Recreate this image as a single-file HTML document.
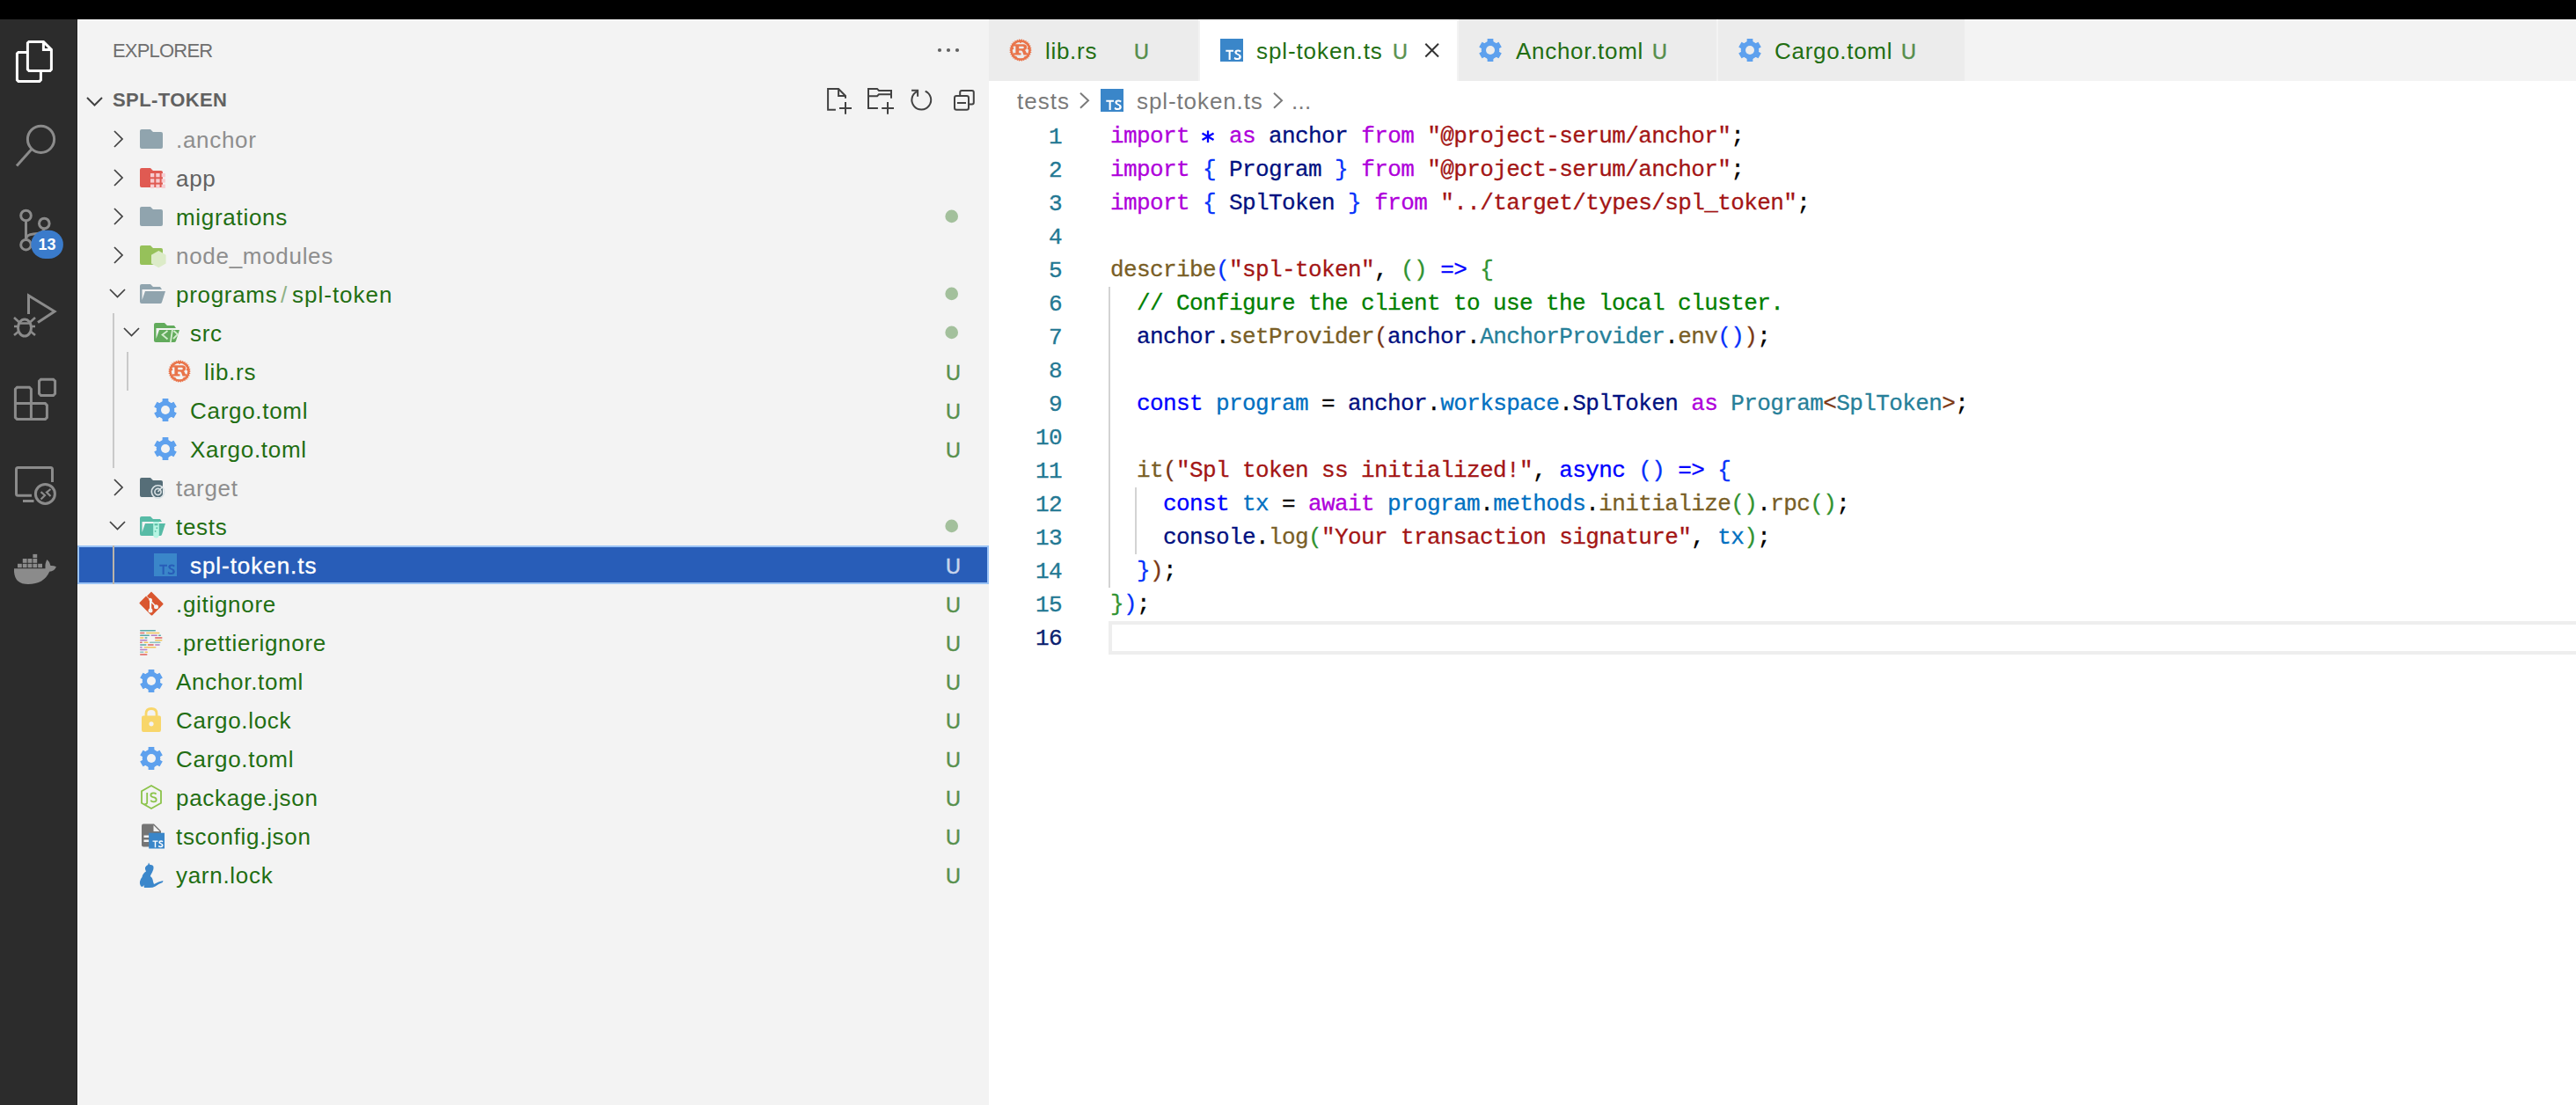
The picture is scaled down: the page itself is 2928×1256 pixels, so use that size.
<!DOCTYPE html><html><head><meta charset="utf-8"><style>
html,body{margin:0;padding:0;}
body{width:2928px;height:1256px;overflow:hidden;position:relative;background:#fff;font-family:'Liberation Sans', sans-serif;}
div{box-sizing:border-box;}
</style></head><body>
<div style="position:absolute;left:0;top:0;width:2928px;height:22px;background:#000"></div>
<div style="position:absolute;left:0;top:22px;width:88px;height:1234px;background:#2c2c2c"></div>
<div style="position:absolute;left:88px;top:22px;width:1036px;height:1234px;background:#f3f3f3"></div>
<div style="position:absolute;left:1124px;top:22px;width:1804px;height:70px;background:#f3f3f3"></div>
<div style="position:absolute;left:87px;top:22px;width:1px;height:1234px;background:#222"></div>
<div style="position:absolute;left:88px;top:22px;width:1px;height:1234px;background:#fff"></div>
<div style="position:absolute;left:88px;top:22px;width:2840px;height:1px;background:#fafafa"></div>
<svg style="position:absolute;left:0px;top:0px;overflow:visible" width="88" height="700" viewBox="0 0 88 700" ><path d="M32.9 47.4 H49.4 L58.4 56.4 V78.9 L56.9 80.4 H32.9 L31.4 78.9 V48.9 Z M49.4 47.4 V56.4 H58.4" fill="none" stroke="#fff" stroke-width="3" stroke-linejoin="miter"/><path d="M31.4 59.4 H20.9 L19.4 60.9 V90.9 L20.9 92.4 H44.9 L46.4 90.9 V80.4" fill="none" stroke="#fff" stroke-width="3"/><circle cx="46.5" cy="158.3" r="15.1" fill="none" stroke="#8b8b8b" stroke-width="3"/><path d="M36 169.5 L19 188.5" stroke="#8b8b8b" stroke-width="3"/><circle cx="29.5" cy="245" r="5.8" fill="none" stroke="#8b8b8b" stroke-width="3"/><circle cx="50.3" cy="254" r="5.8" fill="none" stroke="#8b8b8b" stroke-width="3"/><circle cx="29.5" cy="278.2" r="5.8" fill="none" stroke="#8b8b8b" stroke-width="3"/><path d="M29.5 250.8 V272.4 M29.5 272 Q30 266.5 38 266 Q50 265 50.3 259.8" fill="none" stroke="#8b8b8b" stroke-width="3"/><rect x="35.3" y="261.7" width="36.6" height="32.4" rx="16.2" fill="#3a7bcb"/><text x="53.5" y="284.4" text-anchor="middle" font-family="Liberation Sans" font-weight="bold" font-size="18" fill="#fff">13</text><path d="M32.5 357 V336 L62 354 L43 366.5" fill="none" stroke="#8b8b8b" stroke-width="3" stroke-linejoin="miter"/><ellipse cx="28" cy="372.5" rx="7.5" ry="9.5" fill="none" stroke="#8b8b8b" stroke-width="3"/><path d="M21 367.5 H35 M16 361 L21.5 366 M40 361 L34.5 366 M16 371 H20.5 M35.5 371 H40 M16 381 L21.5 376.5 M40 381 L34.5 376.5" fill="none" stroke="#8b8b8b" stroke-width="2.6"/><path d="M19.4 440.3 H33.4 L35.4 442.3 V458.6 H51.4 L53.4 460.6 V474.6 L51.4 476.6 H19.4 L17.4 474.6 V442.3 Z M17.4 458.6 H35.4 V476.6" fill="none" stroke="#8b8b8b" stroke-width="3"/><path d="M46.5 431.2 H60.6 L62.6 433.2 V447.5 L60.6 449.5 H46.5 L44.5 447.5 V433.2 Z" fill="none" stroke="#8b8b8b" stroke-width="3"/><path d="M36 563.2 H20.5 Q18.5 563.2 18.5 561.2 V533.5 Q18.5 531.5 20.5 531.5 H57.5 Q59.5 531.5 59.5 533.5 V548" fill="none" stroke="#8b8b8b" stroke-width="3"/><path d="M26 569.5 H38.5" stroke="#8b8b8b" stroke-width="3"/><circle cx="51.4" cy="561.4" r="11" fill="none" stroke="#8b8b8b" stroke-width="3"/><path d="M46.5 559.2 L51 563 L46.5 567.5 M57.5 556 L53 559.6 L57.5 564" fill="none" stroke="#8b8b8b" stroke-width="2.2"/><rect x="20.0" y="640.8" width="4.8" height="4.4" fill="#8b8b8b"/><rect x="25.8" y="640.8" width="4.8" height="4.4" fill="#8b8b8b"/><rect x="31.6" y="640.8" width="4.8" height="4.4" fill="#8b8b8b"/><rect x="37.4" y="640.8" width="4.8" height="4.4" fill="#8b8b8b"/><rect x="43.2" y="640.8" width="4.8" height="4.4" fill="#8b8b8b"/><rect x="25.8" y="635" width="4.8" height="4.8" fill="#8b8b8b"/><rect x="31.6" y="635" width="4.8" height="4.8" fill="#8b8b8b"/><rect x="37.4" y="635" width="4.8" height="4.8" fill="#8b8b8b"/><rect x="37.4" y="629.9" width="4.8" height="4.2" fill="#8b8b8b"/><path d="M16 646.2 H51.5 Q51 640 53.5 636 Q57 639 57.5 643 Q60.5 642.5 64 644.3 Q61.5 649.5 56.2 649.8 Q50 664 32 664 Q17 664 16 650 Z" fill="#8b8b8b"/></svg>
<div style="position:absolute;left:128px;top:36px;height:44px;line-height:44px;font-family:'Liberation Sans', sans-serif;font-size:22px;font-weight:normal;color:#6f6f6f;letter-spacing:-0.8px;white-space:pre;">EXPLORER</div>
<svg style="position:absolute;left:1060px;top:50px;overflow:visible" width="40" height="14" viewBox="0 0 40 14" ><circle cx="8" cy="7" r="2.1" fill="#616161"/><circle cx="18" cy="7" r="2.1" fill="#616161"/><circle cx="28" cy="7" r="2.1" fill="#616161"/></svg>
<svg style="position:absolute;left:98px;top:109.5px;overflow:visible" width="20" height="12" viewBox="0 0 20 12" ><path d="M1 1 L9.5 9.5 L18 1" fill="none" stroke="#424242" stroke-width="2"/></svg>
<div style="position:absolute;left:128px;top:92px;height:44px;line-height:44px;font-family:'Liberation Sans', sans-serif;font-size:22px;font-weight:bold;color:#616161;letter-spacing:0.4px;white-space:pre;">SPL-TOKEN</div>
<svg style="position:absolute;left:0px;top:0px;overflow:visible" width="1124" height="140" viewBox="0 0 1124 140" ><path d="M949.9 124.8 H941.1 V101.1 H953.1 L961 109 V111.7 M953.1 101.1 V109 H961" fill="none" stroke="#424242" stroke-width="2"/><path d="M961 116 V129.8 M954 122.9 H968" stroke="#424242" stroke-width="2"/><path d="M997.9 122.9 H987 V100.9 H997 L999 102.9 H1013 V111.7 M1013 107.2 H999 L997 109.2 H987" fill="none" stroke="#424242" stroke-width="2"/><path d="M1009 116 V129.8 M1002.2 122.9 H1016" stroke="#424242" stroke-width="2"/><path d="M1051.7 103.6 A10.9 10.9 0 1 1 1042.5 103.8" fill="none" stroke="#424242" stroke-width="2"/><path d="M1036.1 102.7 H1043.1 V109.7" fill="none" stroke="#424242" stroke-width="2"/><path d="M1091.2 108.5 V105 Q1091.2 103 1093.2 103 H1104.8 Q1106.8 103 1106.8 105 V116.6 Q1106.8 118.6 1104.8 118.6 H1101.5" fill="none" stroke="#424242" stroke-width="2"/><rect x="1085" y="109" width="16" height="15.8" rx="2.2" fill="none" stroke="#424242" stroke-width="2"/><path d="M1088 117 H1098" stroke="#424242" stroke-width="2"/></svg>
<div style="position:absolute;left:88px;top:620px;width:1036px;height:44px;background:#285db8;border:2px solid #9ac3f6"></div>
<div style="position:absolute;left:128px;top:356px;width:2px;height:176px;background:#c9c9c9"></div>
<div style="position:absolute;left:144px;top:400px;width:2px;height:44px;background:#c9c9c9"></div>
<div style="position:absolute;left:128px;top:620px;width:2px;height:44px;background:#b9b3a9"></div>
<svg style="position:absolute;left:128.5px;top:148px;overflow:visible" width="12" height="22" viewBox="0 0 12 22" ><path d="M1 1 L10 10 L1 19" fill="none" stroke="#424242" stroke-width="1.75"/></svg>
<svg style="position:absolute;left:159px;top:147px;overflow:visible" width="26" height="22" viewBox="0 0 26 22" ><path d="M2 0 H12 L15 3 H24 Q26 3 26 5 V20 Q26 22 24 22 H2 Q0 22 0 20 V2 Q0 0 2 0 Z" fill="#90a4ae"/></svg>
<div style="position:absolute;left:200px;top:137px;height:44px;line-height:44px;font-family:'Liberation Sans', sans-serif;font-size:26px;font-weight:normal;color:#8e8e8e;letter-spacing:0.7px;white-space:pre;">.anchor</div>
<svg style="position:absolute;left:128.5px;top:192px;overflow:visible" width="12" height="22" viewBox="0 0 12 22" ><path d="M1 1 L10 10 L1 19" fill="none" stroke="#424242" stroke-width="1.75"/></svg>
<svg style="position:absolute;left:159px;top:191px;overflow:visible" width="30" height="24" viewBox="0 0 30 24" ><path d="M2 0 H12 L15 3 H24 Q26 3 26 5 V20 Q26 22 24 22 H2 Q0 22 0 20 V2 Q0 0 2 0 Z" fill="#e05a52"/><rect x="12.0" y="6.0" width="4.3" height="4.3" fill="#f7cdd1"/><rect x="18.3" y="6.0" width="4.3" height="4.3" fill="#f7cdd1"/><rect x="24.6" y="6.0" width="4.3" height="4.3" fill="#f7cdd1"/><rect x="12.0" y="12.3" width="4.3" height="4.3" fill="#f7cdd1"/><rect x="18.3" y="12.3" width="4.3" height="4.3" fill="#f7cdd1"/><rect x="24.6" y="12.3" width="4.3" height="4.3" fill="#f7cdd1"/><rect x="12.0" y="18.6" width="4.3" height="4.3" fill="#f7cdd1"/><rect x="18.3" y="18.6" width="4.3" height="4.3" fill="#f7cdd1"/><rect x="24.6" y="18.6" width="4.3" height="4.3" fill="#f7cdd1"/></svg>
<div style="position:absolute;left:200px;top:181px;height:44px;line-height:44px;font-family:'Liberation Sans', sans-serif;font-size:26px;font-weight:normal;color:#616161;letter-spacing:0.7px;white-space:pre;">app</div>
<svg style="position:absolute;left:128.5px;top:236px;overflow:visible" width="12" height="22" viewBox="0 0 12 22" ><path d="M1 1 L10 10 L1 19" fill="none" stroke="#424242" stroke-width="1.75"/></svg>
<svg style="position:absolute;left:159px;top:235px;overflow:visible" width="26" height="22" viewBox="0 0 26 22" ><path d="M2 0 H12 L15 3 H24 Q26 3 26 5 V20 Q26 22 24 22 H2 Q0 22 0 20 V2 Q0 0 2 0 Z" fill="#90a4ae"/></svg>
<div style="position:absolute;left:200px;top:225px;height:44px;line-height:44px;font-family:'Liberation Sans', sans-serif;font-size:26px;font-weight:normal;color:#226e12;letter-spacing:0.7px;white-space:pre;">migrations</div>
<svg style="position:absolute;left:1074px;top:238px;overflow:visible" width="16" height="16" viewBox="0 0 16 16" ><circle cx="7.7" cy="7.9" r="7.3" fill="#a3c09c"/></svg>
<svg style="position:absolute;left:128.5px;top:280px;overflow:visible" width="12" height="22" viewBox="0 0 12 22" ><path d="M1 1 L10 10 L1 19" fill="none" stroke="#424242" stroke-width="1.75"/></svg>
<svg style="position:absolute;left:159px;top:279px;overflow:visible" width="30" height="26" viewBox="0 0 30 26" ><path d="M2 0 H12 L15 3 H24 Q26 3 26 5 V20 Q26 22 24 22 H2 Q0 22 0 20 V2 Q0 0 2 0 Z" fill="#96c15a"/><path d="M21.3 6 L29.6 10.8 V20.4 L21.3 25.2 L13 20.4 V10.8 Z" fill="#dcebc8"/></svg>
<div style="position:absolute;left:200px;top:269px;height:44px;line-height:44px;font-family:'Liberation Sans', sans-serif;font-size:26px;font-weight:normal;color:#8e8e8e;letter-spacing:0.7px;white-space:pre;">node_modules</div>
<svg style="position:absolute;left:124px;top:328px;overflow:visible" width="20" height="12" viewBox="0 0 20 12" ><path d="M1 1 L9.5 9.5 L18 1" fill="none" stroke="#424242" stroke-width="1.75"/></svg>
<svg style="position:absolute;left:159px;top:323px;overflow:visible" width="30" height="22" viewBox="0 0 30 22" ><path d="M2 0 H12 L15 3 H23 L25 6 H2.5 L2.5 18 L6 8 H29 L25 20.5 Q24.5 22 23 22 H2 Q0 22 0 20 V2 Q0 0 2 0 Z" fill="#90a4ae"/></svg>
<div style="position:absolute;left:200px;top:313px;height:44px;line-height:44px;font-family:'Liberation Sans', sans-serif;font-size:26px;font-weight:normal;color:#226e12;letter-spacing:0.7px;white-space:pre;">programs</div>
<div style="position:absolute;left:319px;top:313px;height:44px;line-height:44px;font-family:'Liberation Sans', sans-serif;font-size:26px;font-weight:normal;color:#8fb186;letter-spacing:0px;white-space:pre;">/</div>
<div style="position:absolute;left:332px;top:313px;height:44px;line-height:44px;font-family:'Liberation Sans', sans-serif;font-size:26px;font-weight:normal;color:#226e12;letter-spacing:1.0px;white-space:pre;">spl-token</div>
<svg style="position:absolute;left:1074px;top:326px;overflow:visible" width="16" height="16" viewBox="0 0 16 16" ><circle cx="7.7" cy="7.9" r="7.3" fill="#a3c09c"/></svg>
<svg style="position:absolute;left:140px;top:372px;overflow:visible" width="20" height="12" viewBox="0 0 20 12" ><path d="M1 1 L9.5 9.5 L18 1" fill="none" stroke="#424242" stroke-width="1.75"/></svg>
<svg style="position:absolute;left:175px;top:367px;overflow:visible" width="30" height="24" viewBox="0 0 30 24" ><path d="M2 0 H12 L15 3 H23 L25 6 H2.5 L2.5 18 L6 8 H29 L25 20.5 Q24.5 22 23 22 H2 Q0 22 0 20 V2 Q0 0 2 0 Z" fill="#62ab5c"/><path d="M15.5 9 L9.5 13.5 L15.5 18.5 M21 7.5 L18.8 22.5 M22.5 9 L27 13 L22 18" fill="none" stroke="#d4edd0" stroke-width="1.8"/></svg>
<div style="position:absolute;left:216px;top:357px;height:44px;line-height:44px;font-family:'Liberation Sans', sans-serif;font-size:26px;font-weight:normal;color:#226e12;letter-spacing:0.7px;white-space:pre;">src</div>
<svg style="position:absolute;left:1074px;top:370px;overflow:visible" width="16" height="16" viewBox="0 0 16 16" ><circle cx="7.7" cy="7.9" r="7.3" fill="#a3c09c"/></svg>
<svg style="position:absolute;left:191px;top:409px;overflow:visible" width="26" height="26" viewBox="0 0 26 26" ><path d="M23.60 14.30 L26.00 13.00 L23.60 11.70Z M23.10 16.48 L25.72 15.70 L23.64 13.93Z M22.15 18.50 L24.88 18.29 L23.21 16.12Z M20.81 20.28 L23.52 20.64 L22.34 18.18Z M19.13 21.75 L21.70 22.66 L21.06 20.01Z M17.17 22.83 L19.50 24.26 L19.43 21.53Z M15.04 23.48 L17.02 25.36 L17.51 22.68Z M12.82 23.68 L14.36 25.93 L15.40 23.41Z M10.60 23.41 L11.64 25.93 L13.18 23.68Z M8.49 22.68 L8.98 25.36 L10.96 23.48Z M6.57 21.53 L6.50 24.26 L8.83 22.83Z M4.94 20.01 L4.30 22.66 L6.87 21.75Z M3.66 18.18 L2.48 20.64 L5.19 20.28Z M2.79 16.12 L1.12 18.29 L3.85 18.50Z M2.36 13.93 L0.28 15.70 L2.90 16.48Z M2.40 11.70 L0.00 13.00 L2.40 14.30Z M2.90 9.52 L0.28 10.30 L2.36 12.07Z M3.85 7.50 L1.12 7.71 L2.79 9.88Z M5.19 5.72 L2.48 5.36 L3.66 7.82Z M6.87 4.25 L4.30 3.34 L4.94 5.99Z M8.83 3.17 L6.50 1.74 L6.57 4.47Z M10.96 2.52 L8.98 0.64 L8.49 3.32Z M13.18 2.32 L11.64 0.07 L10.60 2.59Z M15.40 2.59 L14.36 0.07 L12.82 2.32Z M17.51 3.32 L17.02 0.64 L15.04 2.52Z M19.43 4.47 L19.50 1.74 L17.17 3.17Z M21.06 5.99 L21.70 3.34 L19.13 4.25Z M22.34 7.82 L23.52 5.36 L20.81 5.72Z M23.21 9.88 L24.88 7.71 L22.15 7.50Z M23.64 12.07 L25.72 10.30 L23.10 9.52Z" fill="#e9744a"/><circle cx="13" cy="13" r="10.4" fill="none" stroke="#e9744a" stroke-width="2.4"/><circle cx="13" cy="3.9" r="1.1" fill="#e9744a"/><circle cx="4.2" cy="11.2" r="1.1" fill="#e9744a"/><circle cx="21.8" cy="11.2" r="1.1" fill="#e9744a"/><circle cx="7.6" cy="20.8" r="1.1" fill="#e9744a"/><circle cx="18.4" cy="20.8" r="1.1" fill="#e9744a"/><path d="M4.6 6.3 H16.3 Q20.2 6.3 20.2 9.8 Q20.2 12.3 17.8 13.1 Q18.8 13.6 19.3 15 L19.8 16.3 H21.5 V18.6 H16.5 L15.2 14.8 Q14.6 13.6 13.2 13.6 H11.2 V16.3 H13.5 V18.6 H4.6 V16.3 H7.4 V8.6 H4.6 Z M11.2 8.8 V11.2 H15.6 Q16.8 11.2 16.8 10 Q16.8 8.8 15.6 8.8 Z" fill="#e9744a" fill-rule="evenodd"/></svg>
<div style="position:absolute;left:232px;top:401px;height:44px;line-height:44px;font-family:'Liberation Sans', sans-serif;font-size:26px;font-weight:normal;color:#226e12;letter-spacing:0.7px;white-space:pre;">lib.rs</div>
<div style="position:absolute;left:1075px;top:401.5px;height:44px;line-height:44px;font-family:'Liberation Sans', sans-serif;font-size:23.4px;font-weight:normal;color:#226e12;letter-spacing:0px;white-space:pre;opacity:.75;-webkit-text-stroke:0.45px #226e12">U</div>
<svg style="position:absolute;left:175px;top:453px;overflow:visible" width="26" height="26" viewBox="0 0 26 26" ><path d="M9.58 3.60 L9.67 0.12 L16.33 0.12 L16.42 3.60 L19.43 5.34 L22.49 3.68 L25.82 9.45 L22.85 11.26 L22.85 14.74 L25.82 16.55 L22.49 22.32 L19.43 20.66 L16.42 22.40 L16.33 25.88 L9.67 25.88 L9.58 22.40 L6.57 20.66 L3.51 22.32 L0.18 16.55 L3.15 14.74 L3.15 11.26 L0.18 9.45 L3.51 3.68 L6.57 5.34 Z" fill="#5ea1ee"/><circle cx="13" cy="13" r="10.3" fill="#5ea1ee"/><circle cx="13" cy="13" r="5" fill="#f3f3f3"/></svg>
<div style="position:absolute;left:216px;top:445px;height:44px;line-height:44px;font-family:'Liberation Sans', sans-serif;font-size:26px;font-weight:normal;color:#226e12;letter-spacing:0.7px;white-space:pre;">Cargo.toml</div>
<div style="position:absolute;left:1075px;top:445.5px;height:44px;line-height:44px;font-family:'Liberation Sans', sans-serif;font-size:23.4px;font-weight:normal;color:#226e12;letter-spacing:0px;white-space:pre;opacity:.75;-webkit-text-stroke:0.45px #226e12">U</div>
<svg style="position:absolute;left:175px;top:497px;overflow:visible" width="26" height="26" viewBox="0 0 26 26" ><path d="M9.58 3.60 L9.67 0.12 L16.33 0.12 L16.42 3.60 L19.43 5.34 L22.49 3.68 L25.82 9.45 L22.85 11.26 L22.85 14.74 L25.82 16.55 L22.49 22.32 L19.43 20.66 L16.42 22.40 L16.33 25.88 L9.67 25.88 L9.58 22.40 L6.57 20.66 L3.51 22.32 L0.18 16.55 L3.15 14.74 L3.15 11.26 L0.18 9.45 L3.51 3.68 L6.57 5.34 Z" fill="#5ea1ee"/><circle cx="13" cy="13" r="10.3" fill="#5ea1ee"/><circle cx="13" cy="13" r="5" fill="#f3f3f3"/></svg>
<div style="position:absolute;left:216px;top:489px;height:44px;line-height:44px;font-family:'Liberation Sans', sans-serif;font-size:26px;font-weight:normal;color:#226e12;letter-spacing:0.7px;white-space:pre;">Xargo.toml</div>
<div style="position:absolute;left:1075px;top:489.5px;height:44px;line-height:44px;font-family:'Liberation Sans', sans-serif;font-size:23.4px;font-weight:normal;color:#226e12;letter-spacing:0px;white-space:pre;opacity:.75;-webkit-text-stroke:0.45px #226e12">U</div>
<svg style="position:absolute;left:128.5px;top:544px;overflow:visible" width="12" height="22" viewBox="0 0 12 22" ><path d="M1 1 L10 10 L1 19" fill="none" stroke="#424242" stroke-width="1.75"/></svg>
<svg style="position:absolute;left:159px;top:543px;overflow:visible" width="30" height="24" viewBox="0 0 30 24" ><path d="M2 0 H12 L15 3 H24 Q26 3 26 5 V20 Q26 22 24 22 H2 Q0 22 0 20 V2 Q0 0 2 0 Z" fill="#566e78"/><circle cx="20.5" cy="16" r="7.2" fill="none" stroke="#dbe3e6" stroke-width="1.6"/><circle cx="20.5" cy="16" r="3.6" fill="none" stroke="#dbe3e6" stroke-width="1.6"/><path d="M20.5 16 L26 10" stroke="#dbe3e6" stroke-width="1.6"/></svg>
<div style="position:absolute;left:200px;top:533px;height:44px;line-height:44px;font-family:'Liberation Sans', sans-serif;font-size:26px;font-weight:normal;color:#8e8e8e;letter-spacing:0.7px;white-space:pre;">target</div>
<svg style="position:absolute;left:124px;top:592px;overflow:visible" width="20" height="12" viewBox="0 0 20 12" ><path d="M1 1 L9.5 9.5 L18 1" fill="none" stroke="#424242" stroke-width="1.75"/></svg>
<svg style="position:absolute;left:159px;top:587px;overflow:visible" width="30" height="26" viewBox="0 0 30 26" ><path d="M2 0 H12 L15 3 H23 L25 6 H2.5 L2.5 18 L6 8 H29 L25 20.5 Q24.5 22 23 22 H2 Q0 22 0 20 V2 Q0 0 2 0 Z" fill="#57bba6"/><path d="M15.2 6 H21.8 V20.5 Q21.8 24.6 18.5 24.6 Q15.2 24.6 15.2 20.5 Z" fill="#b6f5e3"/><rect x="16.6" y="8.3" width="3.8" height="2" fill="#55bca2"/><circle cx="19.3" cy="13.2" r="0.9" fill="#55bca2"/><circle cx="17.6" cy="16.8" r="0.9" fill="#55bca2"/></svg>
<div style="position:absolute;left:200px;top:577px;height:44px;line-height:44px;font-family:'Liberation Sans', sans-serif;font-size:26px;font-weight:normal;color:#226e12;letter-spacing:0.7px;white-space:pre;">tests</div>
<svg style="position:absolute;left:1074px;top:590px;overflow:visible" width="16" height="16" viewBox="0 0 16 16" ><circle cx="7.7" cy="7.9" r="7.3" fill="#a3c09c"/></svg>
<svg style="position:absolute;left:175px;top:629px;overflow:visible" width="26" height="26" viewBox="0 0 26 26" ><g transform="scale(1.0)"><rect x="0" y="0" width="26" height="26" fill="#3a86c9"/><path d="M6.3 12.7 H15 V14.8 H11.7 V24 H9.6 V14.8 H6.3 Z" fill="#285db8"/><path d="M23.6 13.4 Q22 12.6 20.2 12.6 Q16.3 12.6 16.3 15.6 Q16.3 17.6 19.5 18.6 Q21.4 19.2 21.4 20.4 Q21.4 21.9 19.6 21.9 Q17.7 21.9 16.2 20.7 L15.6 22.9 Q17.4 24.1 19.7 24.1 Q23.8 24.1 23.8 20.5 Q23.8 18.2 20.8 17.2 Q18.7 16.5 18.7 15.5 Q18.7 14.6 20.2 14.6 Q21.7 14.6 23 15.4 Z" fill="#285db8"/></g></svg>
<div style="position:absolute;left:216px;top:621px;height:44px;line-height:44px;font-family:'Liberation Sans', sans-serif;font-size:26px;font-weight:normal;color:#ffffff;letter-spacing:0.95px;white-space:pre;-webkit-text-stroke:0.35px #fff">spl-token.ts</div>
<div style="position:absolute;left:1075px;top:621.5px;height:44px;line-height:44px;font-family:'Liberation Sans', sans-serif;font-size:23.4px;font-weight:normal;color:#ffffff;letter-spacing:0px;white-space:pre;opacity:.75;-webkit-text-stroke:0.45px #ffffff">U</div>
<svg style="position:absolute;left:158px;top:671.5px;overflow:visible" width="28" height="28" viewBox="0 0 28 28" ><path d="M14 0.5 L27.2 13.7 Q28 14.5 27.2 15.3 L15.3 27.2 Q14.5 28 13.7 27.2 L0.8 14.3 Q0 13.5 0.8 12.7 L8 5.5 L11.2 8.7 Q11 10 12 11 V19.5 Q10.5 20.4 10.5 22 Q10.5 24.5 13 24.5 Q15.5 24.5 15.5 22 Q15.5 20.4 14.2 19.5 V13.3 L17.3 16.4 Q17 17 17 17.7 Q17 20.2 19.5 20.2 Q22 20.2 22 17.7 Q22 15.2 19.5 15.2 Q18.9 15.2 18.4 15.4 L14.6 11.6 Q15 11 15 10.2 Q15 7.7 12.5 7.7 Q11.9 7.7 11.4 7.9 L9 5.5 L11 3.5 Z" fill="#d9562f"/></svg>
<div style="position:absolute;left:200px;top:665px;height:44px;line-height:44px;font-family:'Liberation Sans', sans-serif;font-size:26px;font-weight:normal;color:#226e12;letter-spacing:0.7px;white-space:pre;">.gitignore</div>
<div style="position:absolute;left:1075px;top:665.5px;height:44px;line-height:44px;font-family:'Liberation Sans', sans-serif;font-size:23.4px;font-weight:normal;color:#226e12;letter-spacing:0px;white-space:pre;opacity:.75;-webkit-text-stroke:0.45px #226e12">U</div>
<svg style="position:absolute;left:159px;top:714.5px;overflow:visible" width="28" height="32" viewBox="0 0 28 32" ><rect x="0" y="1.00" width="18" height="1.5" rx="0.7" fill="#5aa9a7"/><rect x="0" y="3.72" width="5.5" height="1.5" rx="0.7" fill="#e0706a"/><rect x="7" y="3.72" width="15.5" height="1.5" rx="0.7" fill="#f0c45c"/><rect x="0" y="6.44" width="11" height="1.5" rx="0.7" fill="#5aa9a7"/><rect x="12.5" y="6.44" width="7.5" height="1.5" rx="0.7" fill="#b57fc4"/><rect x="21" y="6.44" width="3" height="1.5" rx="0.7" fill="#5aa9a7"/><rect x="0" y="9.16" width="4.5" height="1.5" rx="0.7" fill="#f0c45c"/><rect x="5.5" y="9.16" width="3" height="1.5" rx="0.7" fill="#5aa9a7"/><rect x="17" y="9.16" width="8.5" height="1.5" rx="0.7" fill="#e0605a"/><rect x="0" y="11.88" width="8.5" height="1.5" rx="0.7" fill="#b57fc4"/><rect x="17" y="11.88" width="8.5" height="1.5" rx="0.7" fill="#f0c45c"/><rect x="0" y="14.60" width="2.8" height="1.5" rx="0.7" fill="#e0706a"/><rect x="4.5" y="14.60" width="5" height="1.5" rx="0.7" fill="#f0c45c"/><rect x="11" y="14.60" width="12.5" height="1.5" rx="0.7" fill="#8cc4c0"/><rect x="0" y="17.32" width="7.5" height="1.5" rx="0.7" fill="#5aa9a7"/><rect x="8.8" y="17.32" width="7" height="1.5" rx="0.7" fill="#e0605a"/><rect x="17" y="17.32" width="5.8" height="1.5" rx="0.7" fill="#b57fc4"/><rect x="0" y="20.04" width="2.8" height="1.5" rx="0.7" fill="#b57fc4"/><rect x="4.5" y="20.04" width="14" height="1.5" rx="0.7" fill="#f0c45c"/><rect x="0" y="22.76" width="8.5" height="1.5" rx="0.7" fill="#b57fc4"/><rect x="0" y="25.48" width="4.5" height="1.5" rx="0.7" fill="#8cc4c0"/><rect x="5.5" y="25.48" width="3.5" height="1.5" rx="0.7" fill="#f0c45c"/><rect x="0" y="28.20" width="8.5" height="1.5" rx="0.7" fill="#e0605a"/></svg>
<div style="position:absolute;left:200px;top:709px;height:44px;line-height:44px;font-family:'Liberation Sans', sans-serif;font-size:26px;font-weight:normal;color:#226e12;letter-spacing:0.7px;white-space:pre;">.prettierignore</div>
<div style="position:absolute;left:1075px;top:709.5px;height:44px;line-height:44px;font-family:'Liberation Sans', sans-serif;font-size:23.4px;font-weight:normal;color:#226e12;letter-spacing:0px;white-space:pre;opacity:.75;-webkit-text-stroke:0.45px #226e12">U</div>
<svg style="position:absolute;left:159px;top:761px;overflow:visible" width="26" height="26" viewBox="0 0 26 26" ><path d="M9.58 3.60 L9.67 0.12 L16.33 0.12 L16.42 3.60 L19.43 5.34 L22.49 3.68 L25.82 9.45 L22.85 11.26 L22.85 14.74 L25.82 16.55 L22.49 22.32 L19.43 20.66 L16.42 22.40 L16.33 25.88 L9.67 25.88 L9.58 22.40 L6.57 20.66 L3.51 22.32 L0.18 16.55 L3.15 14.74 L3.15 11.26 L0.18 9.45 L3.51 3.68 L6.57 5.34 Z" fill="#5ea1ee"/><circle cx="13" cy="13" r="10.3" fill="#5ea1ee"/><circle cx="13" cy="13" r="5" fill="#f3f3f3"/></svg>
<div style="position:absolute;left:200px;top:753px;height:44px;line-height:44px;font-family:'Liberation Sans', sans-serif;font-size:26px;font-weight:normal;color:#226e12;letter-spacing:0.7px;white-space:pre;">Anchor.toml</div>
<div style="position:absolute;left:1075px;top:753.5px;height:44px;line-height:44px;font-family:'Liberation Sans', sans-serif;font-size:23.4px;font-weight:normal;color:#226e12;letter-spacing:0px;white-space:pre;opacity:.75;-webkit-text-stroke:0.45px #226e12">U</div>
<svg style="position:absolute;left:159px;top:804px;overflow:visible" width="26" height="30" viewBox="0 0 26 30" ><path d="M7 10 V7 Q7 1.5 13 1.5 Q19 1.5 19 7 V10" fill="none" stroke="#f8d66a" stroke-width="2.8"/><path d="M4 9.5 H22 Q24 9.5 24 11.5 V25.5 Q24 28 22 28 H4 Q2 28 2 25.5 V11.5 Q2 9.5 4 9.5 Z" fill="#f8d66a"/><circle cx="13" cy="18.8" r="2.6" fill="#f3f3f3"/></svg>
<div style="position:absolute;left:200px;top:797px;height:44px;line-height:44px;font-family:'Liberation Sans', sans-serif;font-size:26px;font-weight:normal;color:#226e12;letter-spacing:0.7px;white-space:pre;">Cargo.lock</div>
<div style="position:absolute;left:1075px;top:797.5px;height:44px;line-height:44px;font-family:'Liberation Sans', sans-serif;font-size:23.4px;font-weight:normal;color:#226e12;letter-spacing:0px;white-space:pre;opacity:.75;-webkit-text-stroke:0.45px #226e12">U</div>
<svg style="position:absolute;left:159px;top:849px;overflow:visible" width="26" height="26" viewBox="0 0 26 26" ><path d="M9.58 3.60 L9.67 0.12 L16.33 0.12 L16.42 3.60 L19.43 5.34 L22.49 3.68 L25.82 9.45 L22.85 11.26 L22.85 14.74 L25.82 16.55 L22.49 22.32 L19.43 20.66 L16.42 22.40 L16.33 25.88 L9.67 25.88 L9.58 22.40 L6.57 20.66 L3.51 22.32 L0.18 16.55 L3.15 14.74 L3.15 11.26 L0.18 9.45 L3.51 3.68 L6.57 5.34 Z" fill="#5ea1ee"/><circle cx="13" cy="13" r="10.3" fill="#5ea1ee"/><circle cx="13" cy="13" r="5" fill="#f3f3f3"/></svg>
<div style="position:absolute;left:200px;top:841px;height:44px;line-height:44px;font-family:'Liberation Sans', sans-serif;font-size:26px;font-weight:normal;color:#226e12;letter-spacing:0.7px;white-space:pre;">Cargo.toml</div>
<div style="position:absolute;left:1075px;top:841.5px;height:44px;line-height:44px;font-family:'Liberation Sans', sans-serif;font-size:23.4px;font-weight:normal;color:#226e12;letter-spacing:0px;white-space:pre;opacity:.75;-webkit-text-stroke:0.45px #226e12">U</div>
<svg style="position:absolute;left:159px;top:892px;overflow:visible" width="26" height="30" viewBox="0 0 26 30" ><path d="M13 1 L24 7.3 V20.7 L13 27 L2 20.7 V7.3 Z" fill="none" stroke="#8bc34a" stroke-width="1.8"/><path d="M8.2 9 V20 Q8.2 22.5 5.5 21.5" fill="none" stroke="#8bc34a" stroke-width="1.8"/><path d="M18.6 10.6 Q17.5 9.4 15.3 9.4 Q12.4 9.4 12.4 11.8 Q12.4 13.6 15.3 14.2 Q18.7 14.8 18.7 16.9 Q18.7 19.3 15.5 19.3 Q13.2 19.3 12.3 17.6" fill="none" stroke="#8bc34a" stroke-width="1.8"/></svg>
<div style="position:absolute;left:200px;top:885px;height:44px;line-height:44px;font-family:'Liberation Sans', sans-serif;font-size:26px;font-weight:normal;color:#226e12;letter-spacing:0.7px;white-space:pre;">package.json</div>
<div style="position:absolute;left:1075px;top:885.5px;height:44px;line-height:44px;font-family:'Liberation Sans', sans-serif;font-size:23.4px;font-weight:normal;color:#226e12;letter-spacing:0px;white-space:pre;opacity:.75;-webkit-text-stroke:0.45px #226e12">U</div>
<svg style="position:absolute;left:158px;top:935.5px;overflow:visible" width="30" height="30" viewBox="0 0 30 30" ><path d="M5 0.5 H17 L25 8.5 V24.5 Q25 26.5 23 26.5 H5 Q3 26.5 3 24.5 V2.5 Q3 0.5 5 0.5 Z" fill="#757575"/><path d="M16.5 2 V9 H23.5 Z" fill="#f3f3f3"/><rect x="5.5" y="13.5" width="6" height="2.5" fill="#f3f3f3"/><rect x="5.5" y="18.5" width="6" height="2.5" fill="#f3f3f3"/><g transform="translate(11.2,10.7) scale(0.685)"><g><rect x="0" y="0" width="26" height="26" fill="#3a86c9"/><path d="M6.3 12.7 H15 V14.8 H11.7 V24 H9.6 V14.8 H6.3 Z" fill="#ffffff"/><path d="M23.6 13.4 Q22 12.6 20.2 12.6 Q16.3 12.6 16.3 15.6 Q16.3 17.6 19.5 18.6 Q21.4 19.2 21.4 20.4 Q21.4 21.9 19.6 21.9 Q17.7 21.9 16.2 20.7 L15.6 22.9 Q17.4 24.1 19.7 24.1 Q23.8 24.1 23.8 20.5 Q23.8 18.2 20.8 17.2 Q18.7 16.5 18.7 15.5 Q18.7 14.6 20.2 14.6 Q21.7 14.6 23 15.4 Z" fill="#ffffff"/></g></g></svg>
<div style="position:absolute;left:200px;top:929px;height:44px;line-height:44px;font-family:'Liberation Sans', sans-serif;font-size:26px;font-weight:normal;color:#226e12;letter-spacing:0.7px;white-space:pre;">tsconfig.json</div>
<div style="position:absolute;left:1075px;top:929.5px;height:44px;line-height:44px;font-family:'Liberation Sans', sans-serif;font-size:23.4px;font-weight:normal;color:#226e12;letter-spacing:0px;white-space:pre;opacity:.75;-webkit-text-stroke:0.45px #226e12">U</div>
<svg style="position:absolute;left:158px;top:979px;overflow:visible" width="30" height="30" viewBox="0 0 30 30" ><path d="M11 1.5 Q12 3 12.5 4 Q15.5 3.5 16.5 6 Q17 9.5 15 12.5 Q13.5 15 12.8 17 Q15.5 18.5 16 23 L17 26 Q22 23 27.5 22 L26.8 24 Q22 25.5 18.5 28.5 Q16 30 11.5 30 H6 Q5 28.5 6.3 26.8 Q5 28.6 3 29 Q0.5 27 1 23 Q1.5 20 3.5 18 Q4 14 8 11.5 Q6.5 9 7 7 Q8.5 4.5 10.2 4 Z" fill="#3b87cb"/></svg>
<div style="position:absolute;left:200px;top:973px;height:44px;line-height:44px;font-family:'Liberation Sans', sans-serif;font-size:26px;font-weight:normal;color:#226e12;letter-spacing:0.7px;white-space:pre;">yarn.lock</div>
<div style="position:absolute;left:1075px;top:973.5px;height:44px;line-height:44px;font-family:'Liberation Sans', sans-serif;font-size:23.4px;font-weight:normal;color:#226e12;letter-spacing:0px;white-space:pre;opacity:.75;-webkit-text-stroke:0.45px #226e12">U</div>
<div style="position:absolute;left:1124px;top:22px;width:238px;height:70px;background:#ececec"></div>
<div style="position:absolute;left:1364px;top:22px;width:292px;height:70px;background:#ffffff"></div>
<div style="position:absolute;left:1658px;top:22px;width:293px;height:70px;background:#ececec"></div>
<div style="position:absolute;left:1953px;top:22px;width:280px;height:70px;background:#ececec"></div>
<svg style="position:absolute;left:1147px;top:44px;overflow:visible" width="26" height="26" viewBox="0 0 26 26" ><path d="M23.60 14.30 L26.00 13.00 L23.60 11.70Z M23.10 16.48 L25.72 15.70 L23.64 13.93Z M22.15 18.50 L24.88 18.29 L23.21 16.12Z M20.81 20.28 L23.52 20.64 L22.34 18.18Z M19.13 21.75 L21.70 22.66 L21.06 20.01Z M17.17 22.83 L19.50 24.26 L19.43 21.53Z M15.04 23.48 L17.02 25.36 L17.51 22.68Z M12.82 23.68 L14.36 25.93 L15.40 23.41Z M10.60 23.41 L11.64 25.93 L13.18 23.68Z M8.49 22.68 L8.98 25.36 L10.96 23.48Z M6.57 21.53 L6.50 24.26 L8.83 22.83Z M4.94 20.01 L4.30 22.66 L6.87 21.75Z M3.66 18.18 L2.48 20.64 L5.19 20.28Z M2.79 16.12 L1.12 18.29 L3.85 18.50Z M2.36 13.93 L0.28 15.70 L2.90 16.48Z M2.40 11.70 L0.00 13.00 L2.40 14.30Z M2.90 9.52 L0.28 10.30 L2.36 12.07Z M3.85 7.50 L1.12 7.71 L2.79 9.88Z M5.19 5.72 L2.48 5.36 L3.66 7.82Z M6.87 4.25 L4.30 3.34 L4.94 5.99Z M8.83 3.17 L6.50 1.74 L6.57 4.47Z M10.96 2.52 L8.98 0.64 L8.49 3.32Z M13.18 2.32 L11.64 0.07 L10.60 2.59Z M15.40 2.59 L14.36 0.07 L12.82 2.32Z M17.51 3.32 L17.02 0.64 L15.04 2.52Z M19.43 4.47 L19.50 1.74 L17.17 3.17Z M21.06 5.99 L21.70 3.34 L19.13 4.25Z M22.34 7.82 L23.52 5.36 L20.81 5.72Z M23.21 9.88 L24.88 7.71 L22.15 7.50Z M23.64 12.07 L25.72 10.30 L23.10 9.52Z" fill="#e9744a"/><circle cx="13" cy="13" r="10.4" fill="none" stroke="#e9744a" stroke-width="2.4"/><circle cx="13" cy="3.9" r="1.1" fill="#e9744a"/><circle cx="4.2" cy="11.2" r="1.1" fill="#e9744a"/><circle cx="21.8" cy="11.2" r="1.1" fill="#e9744a"/><circle cx="7.6" cy="20.8" r="1.1" fill="#e9744a"/><circle cx="18.4" cy="20.8" r="1.1" fill="#e9744a"/><path d="M4.6 6.3 H16.3 Q20.2 6.3 20.2 9.8 Q20.2 12.3 17.8 13.1 Q18.8 13.6 19.3 15 L19.8 16.3 H21.5 V18.6 H16.5 L15.2 14.8 Q14.6 13.6 13.2 13.6 H11.2 V16.3 H13.5 V18.6 H4.6 V16.3 H7.4 V8.6 H4.6 Z M11.2 8.8 V11.2 H15.6 Q16.8 11.2 16.8 10 Q16.8 8.8 15.6 8.8 Z" fill="#e9744a" fill-rule="evenodd"/></svg>
<div style="position:absolute;left:1188px;top:36px;height:44px;line-height:44px;font-family:'Liberation Sans', sans-serif;font-size:26px;font-weight:normal;color:#226e12;letter-spacing:0.7px;white-space:pre;">lib.rs</div>
<div style="position:absolute;left:1289px;top:36.5px;height:44px;line-height:44px;font-family:'Liberation Sans', sans-serif;font-size:23.4px;font-weight:normal;color:#226e12;letter-spacing:0px;white-space:pre;opacity:.75;-webkit-text-stroke:0.45px #226e12">U</div>
<svg style="position:absolute;left:1387px;top:44px;overflow:visible" width="26" height="26" viewBox="0 0 26 26" ><g transform="scale(1.0)"><rect x="0" y="0" width="26" height="26" fill="#3a86c9"/><path d="M6.3 12.7 H15 V14.8 H11.7 V24 H9.6 V14.8 H6.3 Z" fill="#ffffff"/><path d="M23.6 13.4 Q22 12.6 20.2 12.6 Q16.3 12.6 16.3 15.6 Q16.3 17.6 19.5 18.6 Q21.4 19.2 21.4 20.4 Q21.4 21.9 19.6 21.9 Q17.7 21.9 16.2 20.7 L15.6 22.9 Q17.4 24.1 19.7 24.1 Q23.8 24.1 23.8 20.5 Q23.8 18.2 20.8 17.2 Q18.7 16.5 18.7 15.5 Q18.7 14.6 20.2 14.6 Q21.7 14.6 23 15.4 Z" fill="#ffffff"/></g></svg>
<div style="position:absolute;left:1428px;top:36px;height:44px;line-height:44px;font-family:'Liberation Sans', sans-serif;font-size:26px;font-weight:normal;color:#226e12;letter-spacing:0.9px;white-space:pre;">spl-token.ts</div>
<div style="position:absolute;left:1583px;top:36.5px;height:44px;line-height:44px;font-family:'Liberation Sans', sans-serif;font-size:23.4px;font-weight:normal;color:#226e12;letter-spacing:0px;white-space:pre;opacity:.75;-webkit-text-stroke:0.45px #226e12">U</div>
<svg style="position:absolute;left:1618px;top:47px;overflow:visible" width="20" height="20" viewBox="0 0 20 20" ><path d="M2.3 2.7 L17 17.5 M17 2.7 L2.3 17.5" stroke="#333" stroke-width="2"/></svg>
<svg style="position:absolute;left:1681px;top:44px;overflow:visible" width="26" height="26" viewBox="0 0 26 26" ><path d="M9.58 3.60 L9.67 0.12 L16.33 0.12 L16.42 3.60 L19.43 5.34 L22.49 3.68 L25.82 9.45 L22.85 11.26 L22.85 14.74 L25.82 16.55 L22.49 22.32 L19.43 20.66 L16.42 22.40 L16.33 25.88 L9.67 25.88 L9.58 22.40 L6.57 20.66 L3.51 22.32 L0.18 16.55 L3.15 14.74 L3.15 11.26 L0.18 9.45 L3.51 3.68 L6.57 5.34 Z" fill="#5ea1ee"/><circle cx="13" cy="13" r="10.3" fill="#5ea1ee"/><circle cx="13" cy="13" r="5" fill="#ececec"/></svg>
<div style="position:absolute;left:1723px;top:36px;height:44px;line-height:44px;font-family:'Liberation Sans', sans-serif;font-size:26px;font-weight:normal;color:#226e12;letter-spacing:0.7px;white-space:pre;">Anchor.toml</div>
<div style="position:absolute;left:1878px;top:36.5px;height:44px;line-height:44px;font-family:'Liberation Sans', sans-serif;font-size:23.4px;font-weight:normal;color:#226e12;letter-spacing:0px;white-space:pre;opacity:.75;-webkit-text-stroke:0.45px #226e12">U</div>
<svg style="position:absolute;left:1976px;top:44px;overflow:visible" width="26" height="26" viewBox="0 0 26 26" ><path d="M9.58 3.60 L9.67 0.12 L16.33 0.12 L16.42 3.60 L19.43 5.34 L22.49 3.68 L25.82 9.45 L22.85 11.26 L22.85 14.74 L25.82 16.55 L22.49 22.32 L19.43 20.66 L16.42 22.40 L16.33 25.88 L9.67 25.88 L9.58 22.40 L6.57 20.66 L3.51 22.32 L0.18 16.55 L3.15 14.74 L3.15 11.26 L0.18 9.45 L3.51 3.68 L6.57 5.34 Z" fill="#5ea1ee"/><circle cx="13" cy="13" r="10.3" fill="#5ea1ee"/><circle cx="13" cy="13" r="5" fill="#ececec"/></svg>
<div style="position:absolute;left:2017px;top:36px;height:44px;line-height:44px;font-family:'Liberation Sans', sans-serif;font-size:26px;font-weight:normal;color:#226e12;letter-spacing:0.7px;white-space:pre;">Cargo.toml</div>
<div style="position:absolute;left:2161px;top:36.5px;height:44px;line-height:44px;font-family:'Liberation Sans', sans-serif;font-size:23.4px;font-weight:normal;color:#226e12;letter-spacing:0px;white-space:pre;opacity:.75;-webkit-text-stroke:0.45px #226e12">U</div>
<div style="position:absolute;left:1156px;top:93px;height:44px;line-height:44px;font-family:'Liberation Sans', sans-serif;font-size:26px;font-weight:normal;color:#7a7a7a;letter-spacing:1.0px;white-space:pre;">tests</div>
<svg style="position:absolute;left:1226px;top:104px;overflow:visible" width="14" height="22" viewBox="0 0 14 22" ><path d="M2 1.8 L11 10.3 L2 18.8" fill="none" stroke="#7a7a7a" stroke-width="2"/></svg>
<svg style="position:absolute;left:1251px;top:101px;overflow:visible" width="26" height="26" viewBox="0 0 26 26" ><g transform="scale(1.0)"><rect x="0" y="0" width="26" height="26" fill="#3a86c9"/><path d="M6.3 12.7 H15 V14.8 H11.7 V24 H9.6 V14.8 H6.3 Z" fill="#ffffff"/><path d="M23.6 13.4 Q22 12.6 20.2 12.6 Q16.3 12.6 16.3 15.6 Q16.3 17.6 19.5 18.6 Q21.4 19.2 21.4 20.4 Q21.4 21.9 19.6 21.9 Q17.7 21.9 16.2 20.7 L15.6 22.9 Q17.4 24.1 19.7 24.1 Q23.8 24.1 23.8 20.5 Q23.8 18.2 20.8 17.2 Q18.7 16.5 18.7 15.5 Q18.7 14.6 20.2 14.6 Q21.7 14.6 23 15.4 Z" fill="#ffffff"/></g></svg>
<div style="position:absolute;left:1292px;top:93px;height:44px;line-height:44px;font-family:'Liberation Sans', sans-serif;font-size:26px;font-weight:normal;color:#7a7a7a;letter-spacing:0.9px;white-space:pre;">spl-token.ts</div>
<svg style="position:absolute;left:1446px;top:104px;overflow:visible" width="14" height="22" viewBox="0 0 14 22" ><path d="M2 1.8 L11 10.3 L2 18.8" fill="none" stroke="#7a7a7a" stroke-width="2"/></svg>
<div style="position:absolute;left:1468px;top:93px;height:44px;line-height:44px;font-family:'Liberation Sans', sans-serif;font-size:26px;font-weight:normal;color:#7a7a7a;letter-spacing:0.3px;white-space:pre;">...</div>
<div style="position:absolute;left:1260px;top:706px;width:1678px;height:38px;border:4px solid #eeeeee"></div>
<div style="position:absolute;left:1260px;top:326px;width:2px;height:342px;background:#d3d3d3"></div>
<div style="position:absolute;left:1290px;top:554px;width:2px;height:76px;background:#d3d3d3"></div>
<svg style="position:absolute;left:1360px;top:140px;overflow:visible" width="30" height="30" viewBox="0 0 30 30" ><path d="M13 8.5 V22 M6.5 11.6 L19.5 18.9 M6.5 18.9 L19.5 11.6" stroke="#0000ff" stroke-width="2.3"/></svg>
<div style="position:absolute;left:1100px;top:136.5px;width:107px;height:38px;line-height:38px;text-align:right;font-family:'Liberation Mono', monospace;font-size:26px;letter-spacing:-0.6px;color:#237893;white-space:pre;-webkit-text-stroke:0.3px #237893">1</div>
<div style="position:absolute;left:1262px;top:136.3px;height:38px;line-height:38px;font-family:'Liberation Mono', monospace;font-size:26px;letter-spacing:-0.6px;white-space:pre;-webkit-text-stroke:0.3px currentColor"><span style="color:#af00db;-webkit-text-stroke:0.3px #af00db">import</span><span style="color:#000000;-webkit-text-stroke:0.3px #000000"> </span><span style="color:#0000ff;-webkit-text-stroke:0.3px #0000ff"> </span><span style="color:#000000;-webkit-text-stroke:0.3px #000000"> </span><span style="color:#af00db;-webkit-text-stroke:0.3px #af00db">as</span><span style="color:#000000;-webkit-text-stroke:0.3px #000000"> </span><span style="color:#001080;-webkit-text-stroke:0.3px #001080">anchor</span><span style="color:#000000;-webkit-text-stroke:0.3px #000000"> </span><span style="color:#af00db;-webkit-text-stroke:0.3px #af00db">from</span><span style="color:#000000;-webkit-text-stroke:0.3px #000000"> </span><span style="color:#a31515;-webkit-text-stroke:0.3px #a31515">&quot;@project-serum/anchor&quot;</span><span style="color:#000000;-webkit-text-stroke:0.3px #000000">;</span></div>
<div style="position:absolute;left:1100px;top:174.5px;width:107px;height:38px;line-height:38px;text-align:right;font-family:'Liberation Mono', monospace;font-size:26px;letter-spacing:-0.6px;color:#237893;white-space:pre;-webkit-text-stroke:0.3px #237893">2</div>
<div style="position:absolute;left:1262px;top:174.3px;height:38px;line-height:38px;font-family:'Liberation Mono', monospace;font-size:26px;letter-spacing:-0.6px;white-space:pre;-webkit-text-stroke:0.3px currentColor"><span style="color:#af00db;-webkit-text-stroke:0.3px #af00db">import</span><span style="color:#000000;-webkit-text-stroke:0.3px #000000"> </span><span style="color:#0431fa;-webkit-text-stroke:0.3px #0431fa">{</span><span style="color:#000000;-webkit-text-stroke:0.3px #000000"> </span><span style="color:#001080;-webkit-text-stroke:0.3px #001080">Program</span><span style="color:#000000;-webkit-text-stroke:0.3px #000000"> </span><span style="color:#0431fa;-webkit-text-stroke:0.3px #0431fa">}</span><span style="color:#000000;-webkit-text-stroke:0.3px #000000"> </span><span style="color:#af00db;-webkit-text-stroke:0.3px #af00db">from</span><span style="color:#000000;-webkit-text-stroke:0.3px #000000"> </span><span style="color:#a31515;-webkit-text-stroke:0.3px #a31515">&quot;@project-serum/anchor&quot;</span><span style="color:#000000;-webkit-text-stroke:0.3px #000000">;</span></div>
<div style="position:absolute;left:1100px;top:212.5px;width:107px;height:38px;line-height:38px;text-align:right;font-family:'Liberation Mono', monospace;font-size:26px;letter-spacing:-0.6px;color:#237893;white-space:pre;-webkit-text-stroke:0.3px #237893">3</div>
<div style="position:absolute;left:1262px;top:212.3px;height:38px;line-height:38px;font-family:'Liberation Mono', monospace;font-size:26px;letter-spacing:-0.6px;white-space:pre;-webkit-text-stroke:0.3px currentColor"><span style="color:#af00db;-webkit-text-stroke:0.3px #af00db">import</span><span style="color:#000000;-webkit-text-stroke:0.3px #000000"> </span><span style="color:#0431fa;-webkit-text-stroke:0.3px #0431fa">{</span><span style="color:#000000;-webkit-text-stroke:0.3px #000000"> </span><span style="color:#001080;-webkit-text-stroke:0.3px #001080">SplToken</span><span style="color:#000000;-webkit-text-stroke:0.3px #000000"> </span><span style="color:#0431fa;-webkit-text-stroke:0.3px #0431fa">}</span><span style="color:#000000;-webkit-text-stroke:0.3px #000000"> </span><span style="color:#af00db;-webkit-text-stroke:0.3px #af00db">from</span><span style="color:#000000;-webkit-text-stroke:0.3px #000000"> </span><span style="color:#a31515;-webkit-text-stroke:0.3px #a31515">&quot;../target/types/spl_token&quot;</span><span style="color:#000000;-webkit-text-stroke:0.3px #000000">;</span></div>
<div style="position:absolute;left:1100px;top:250.5px;width:107px;height:38px;line-height:38px;text-align:right;font-family:'Liberation Mono', monospace;font-size:26px;letter-spacing:-0.6px;color:#237893;white-space:pre;-webkit-text-stroke:0.3px #237893">4</div>
<div style="position:absolute;left:1262px;top:250.3px;height:38px;line-height:38px;font-family:'Liberation Mono', monospace;font-size:26px;letter-spacing:-0.6px;white-space:pre;-webkit-text-stroke:0.3px currentColor"></div>
<div style="position:absolute;left:1100px;top:288.5px;width:107px;height:38px;line-height:38px;text-align:right;font-family:'Liberation Mono', monospace;font-size:26px;letter-spacing:-0.6px;color:#237893;white-space:pre;-webkit-text-stroke:0.3px #237893">5</div>
<div style="position:absolute;left:1262px;top:288.3px;height:38px;line-height:38px;font-family:'Liberation Mono', monospace;font-size:26px;letter-spacing:-0.6px;white-space:pre;-webkit-text-stroke:0.3px currentColor"><span style="color:#795e26;-webkit-text-stroke:0.3px #795e26">describe</span><span style="color:#0431fa;-webkit-text-stroke:0.3px #0431fa">(</span><span style="color:#a31515;-webkit-text-stroke:0.3px #a31515">&quot;spl-token&quot;</span><span style="color:#000000;-webkit-text-stroke:0.3px #000000">, </span><span style="color:#319331;-webkit-text-stroke:0.3px #319331">()</span><span style="color:#000000;-webkit-text-stroke:0.3px #000000"> </span><span style="color:#0000ff;-webkit-text-stroke:0.3px #0000ff">=&gt;</span><span style="color:#000000;-webkit-text-stroke:0.3px #000000"> </span><span style="color:#319331;-webkit-text-stroke:0.3px #319331">{</span></div>
<div style="position:absolute;left:1100px;top:326.5px;width:107px;height:38px;line-height:38px;text-align:right;font-family:'Liberation Mono', monospace;font-size:26px;letter-spacing:-0.6px;color:#237893;white-space:pre;-webkit-text-stroke:0.3px #237893">6</div>
<div style="position:absolute;left:1262px;top:326.3px;height:38px;line-height:38px;font-family:'Liberation Mono', monospace;font-size:26px;letter-spacing:-0.6px;white-space:pre;-webkit-text-stroke:0.3px currentColor"><span style="color:#000000;-webkit-text-stroke:0.3px #000000">  </span><span style="color:#008000;-webkit-text-stroke:0.3px #008000">// Configure the client to use the local cluster.</span></div>
<div style="position:absolute;left:1100px;top:364.5px;width:107px;height:38px;line-height:38px;text-align:right;font-family:'Liberation Mono', monospace;font-size:26px;letter-spacing:-0.6px;color:#237893;white-space:pre;-webkit-text-stroke:0.3px #237893">7</div>
<div style="position:absolute;left:1262px;top:364.3px;height:38px;line-height:38px;font-family:'Liberation Mono', monospace;font-size:26px;letter-spacing:-0.6px;white-space:pre;-webkit-text-stroke:0.3px currentColor"><span style="color:#000000;-webkit-text-stroke:0.3px #000000">  </span><span style="color:#001080;-webkit-text-stroke:0.3px #001080">anchor</span><span style="color:#000000;-webkit-text-stroke:0.3px #000000">.</span><span style="color:#795e26;-webkit-text-stroke:0.3px #795e26">setProvider</span><span style="color:#7b3814;-webkit-text-stroke:0.3px #7b3814">(</span><span style="color:#001080;-webkit-text-stroke:0.3px #001080">anchor</span><span style="color:#000000;-webkit-text-stroke:0.3px #000000">.</span><span style="color:#267f99;-webkit-text-stroke:0.3px #267f99">AnchorProvider</span><span style="color:#000000;-webkit-text-stroke:0.3px #000000">.</span><span style="color:#795e26;-webkit-text-stroke:0.3px #795e26">env</span><span style="color:#0431fa;-webkit-text-stroke:0.3px #0431fa">()</span><span style="color:#7b3814;-webkit-text-stroke:0.3px #7b3814">)</span><span style="color:#000000;-webkit-text-stroke:0.3px #000000">;</span></div>
<div style="position:absolute;left:1100px;top:402.5px;width:107px;height:38px;line-height:38px;text-align:right;font-family:'Liberation Mono', monospace;font-size:26px;letter-spacing:-0.6px;color:#237893;white-space:pre;-webkit-text-stroke:0.3px #237893">8</div>
<div style="position:absolute;left:1262px;top:402.3px;height:38px;line-height:38px;font-family:'Liberation Mono', monospace;font-size:26px;letter-spacing:-0.6px;white-space:pre;-webkit-text-stroke:0.3px currentColor"></div>
<div style="position:absolute;left:1100px;top:440.5px;width:107px;height:38px;line-height:38px;text-align:right;font-family:'Liberation Mono', monospace;font-size:26px;letter-spacing:-0.6px;color:#237893;white-space:pre;-webkit-text-stroke:0.3px #237893">9</div>
<div style="position:absolute;left:1262px;top:440.3px;height:38px;line-height:38px;font-family:'Liberation Mono', monospace;font-size:26px;letter-spacing:-0.6px;white-space:pre;-webkit-text-stroke:0.3px currentColor"><span style="color:#000000;-webkit-text-stroke:0.3px #000000">  </span><span style="color:#0000ff;-webkit-text-stroke:0.3px #0000ff">const</span><span style="color:#000000;-webkit-text-stroke:0.3px #000000"> </span><span style="color:#0070c1;-webkit-text-stroke:0.3px #0070c1">program</span><span style="color:#000000;-webkit-text-stroke:0.3px #000000"> = </span><span style="color:#001080;-webkit-text-stroke:0.3px #001080">anchor</span><span style="color:#000000;-webkit-text-stroke:0.3px #000000">.</span><span style="color:#0070c1;-webkit-text-stroke:0.3px #0070c1">workspace</span><span style="color:#000000;-webkit-text-stroke:0.3px #000000">.</span><span style="color:#001080;-webkit-text-stroke:0.3px #001080">SplToken</span><span style="color:#000000;-webkit-text-stroke:0.3px #000000"> </span><span style="color:#af00db;-webkit-text-stroke:0.3px #af00db">as</span><span style="color:#000000;-webkit-text-stroke:0.3px #000000"> </span><span style="color:#267f99;-webkit-text-stroke:0.3px #267f99">Program</span><span style="color:#7b3814;-webkit-text-stroke:0.3px #7b3814">&lt;</span><span style="color:#267f99;-webkit-text-stroke:0.3px #267f99">SplToken</span><span style="color:#7b3814;-webkit-text-stroke:0.3px #7b3814">&gt;</span><span style="color:#000000;-webkit-text-stroke:0.3px #000000">;</span></div>
<div style="position:absolute;left:1100px;top:478.5px;width:107px;height:38px;line-height:38px;text-align:right;font-family:'Liberation Mono', monospace;font-size:26px;letter-spacing:-0.6px;color:#237893;white-space:pre;-webkit-text-stroke:0.3px #237893">10</div>
<div style="position:absolute;left:1262px;top:478.3px;height:38px;line-height:38px;font-family:'Liberation Mono', monospace;font-size:26px;letter-spacing:-0.6px;white-space:pre;-webkit-text-stroke:0.3px currentColor"></div>
<div style="position:absolute;left:1100px;top:516.5px;width:107px;height:38px;line-height:38px;text-align:right;font-family:'Liberation Mono', monospace;font-size:26px;letter-spacing:-0.6px;color:#237893;white-space:pre;-webkit-text-stroke:0.3px #237893">11</div>
<div style="position:absolute;left:1262px;top:516.3px;height:38px;line-height:38px;font-family:'Liberation Mono', monospace;font-size:26px;letter-spacing:-0.6px;white-space:pre;-webkit-text-stroke:0.3px currentColor"><span style="color:#000000;-webkit-text-stroke:0.3px #000000">  </span><span style="color:#795e26;-webkit-text-stroke:0.3px #795e26">it</span><span style="color:#7b3814;-webkit-text-stroke:0.3px #7b3814">(</span><span style="color:#a31515;-webkit-text-stroke:0.3px #a31515">&quot;Spl token ss initialized!&quot;</span><span style="color:#000000;-webkit-text-stroke:0.3px #000000">, </span><span style="color:#0000ff;-webkit-text-stroke:0.3px #0000ff">async</span><span style="color:#000000;-webkit-text-stroke:0.3px #000000"> </span><span style="color:#0431fa;-webkit-text-stroke:0.3px #0431fa">()</span><span style="color:#000000;-webkit-text-stroke:0.3px #000000"> </span><span style="color:#0000ff;-webkit-text-stroke:0.3px #0000ff">=&gt;</span><span style="color:#000000;-webkit-text-stroke:0.3px #000000"> </span><span style="color:#0431fa;-webkit-text-stroke:0.3px #0431fa">{</span></div>
<div style="position:absolute;left:1100px;top:554.5px;width:107px;height:38px;line-height:38px;text-align:right;font-family:'Liberation Mono', monospace;font-size:26px;letter-spacing:-0.6px;color:#237893;white-space:pre;-webkit-text-stroke:0.3px #237893">12</div>
<div style="position:absolute;left:1262px;top:554.3px;height:38px;line-height:38px;font-family:'Liberation Mono', monospace;font-size:26px;letter-spacing:-0.6px;white-space:pre;-webkit-text-stroke:0.3px currentColor"><span style="color:#000000;-webkit-text-stroke:0.3px #000000">    </span><span style="color:#0000ff;-webkit-text-stroke:0.3px #0000ff">const</span><span style="color:#000000;-webkit-text-stroke:0.3px #000000"> </span><span style="color:#0070c1;-webkit-text-stroke:0.3px #0070c1">tx</span><span style="color:#000000;-webkit-text-stroke:0.3px #000000"> = </span><span style="color:#af00db;-webkit-text-stroke:0.3px #af00db">await</span><span style="color:#000000;-webkit-text-stroke:0.3px #000000"> </span><span style="color:#0070c1;-webkit-text-stroke:0.3px #0070c1">program</span><span style="color:#000000;-webkit-text-stroke:0.3px #000000">.</span><span style="color:#0070c1;-webkit-text-stroke:0.3px #0070c1">methods</span><span style="color:#000000;-webkit-text-stroke:0.3px #000000">.</span><span style="color:#795e26;-webkit-text-stroke:0.3px #795e26">initialize</span><span style="color:#319331;-webkit-text-stroke:0.3px #319331">()</span><span style="color:#000000;-webkit-text-stroke:0.3px #000000">.</span><span style="color:#795e26;-webkit-text-stroke:0.3px #795e26">rpc</span><span style="color:#319331;-webkit-text-stroke:0.3px #319331">()</span><span style="color:#000000;-webkit-text-stroke:0.3px #000000">;</span></div>
<div style="position:absolute;left:1100px;top:592.5px;width:107px;height:38px;line-height:38px;text-align:right;font-family:'Liberation Mono', monospace;font-size:26px;letter-spacing:-0.6px;color:#237893;white-space:pre;-webkit-text-stroke:0.3px #237893">13</div>
<div style="position:absolute;left:1262px;top:592.3px;height:38px;line-height:38px;font-family:'Liberation Mono', monospace;font-size:26px;letter-spacing:-0.6px;white-space:pre;-webkit-text-stroke:0.3px currentColor"><span style="color:#000000;-webkit-text-stroke:0.3px #000000">    </span><span style="color:#001080;-webkit-text-stroke:0.3px #001080">console</span><span style="color:#000000;-webkit-text-stroke:0.3px #000000">.</span><span style="color:#795e26;-webkit-text-stroke:0.3px #795e26">log</span><span style="color:#319331;-webkit-text-stroke:0.3px #319331">(</span><span style="color:#a31515;-webkit-text-stroke:0.3px #a31515">&quot;Your transaction signature&quot;</span><span style="color:#000000;-webkit-text-stroke:0.3px #000000">, </span><span style="color:#0070c1;-webkit-text-stroke:0.3px #0070c1">tx</span><span style="color:#319331;-webkit-text-stroke:0.3px #319331">)</span><span style="color:#000000;-webkit-text-stroke:0.3px #000000">;</span></div>
<div style="position:absolute;left:1100px;top:630.5px;width:107px;height:38px;line-height:38px;text-align:right;font-family:'Liberation Mono', monospace;font-size:26px;letter-spacing:-0.6px;color:#237893;white-space:pre;-webkit-text-stroke:0.3px #237893">14</div>
<div style="position:absolute;left:1262px;top:630.3px;height:38px;line-height:38px;font-family:'Liberation Mono', monospace;font-size:26px;letter-spacing:-0.6px;white-space:pre;-webkit-text-stroke:0.3px currentColor"><span style="color:#000000;-webkit-text-stroke:0.3px #000000">  </span><span style="color:#0431fa;-webkit-text-stroke:0.3px #0431fa">}</span><span style="color:#7b3814;-webkit-text-stroke:0.3px #7b3814">)</span><span style="color:#000000;-webkit-text-stroke:0.3px #000000">;</span></div>
<div style="position:absolute;left:1100px;top:668.5px;width:107px;height:38px;line-height:38px;text-align:right;font-family:'Liberation Mono', monospace;font-size:26px;letter-spacing:-0.6px;color:#237893;white-space:pre;-webkit-text-stroke:0.3px #237893">15</div>
<div style="position:absolute;left:1262px;top:668.3px;height:38px;line-height:38px;font-family:'Liberation Mono', monospace;font-size:26px;letter-spacing:-0.6px;white-space:pre;-webkit-text-stroke:0.3px currentColor"><span style="color:#319331;-webkit-text-stroke:0.3px #319331">}</span><span style="color:#0431fa;-webkit-text-stroke:0.3px #0431fa">)</span><span style="color:#000000;-webkit-text-stroke:0.3px #000000">;</span></div>
<div style="position:absolute;left:1100px;top:706.5px;width:107px;height:38px;line-height:38px;text-align:right;font-family:'Liberation Mono', monospace;font-size:26px;letter-spacing:-0.6px;color:#0b216f;white-space:pre;-webkit-text-stroke:0.3px #0b216f">16</div>
<div style="position:absolute;left:1262px;top:706.3px;height:38px;line-height:38px;font-family:'Liberation Mono', monospace;font-size:26px;letter-spacing:-0.6px;white-space:pre;-webkit-text-stroke:0.3px currentColor"></div>
</body></html>
